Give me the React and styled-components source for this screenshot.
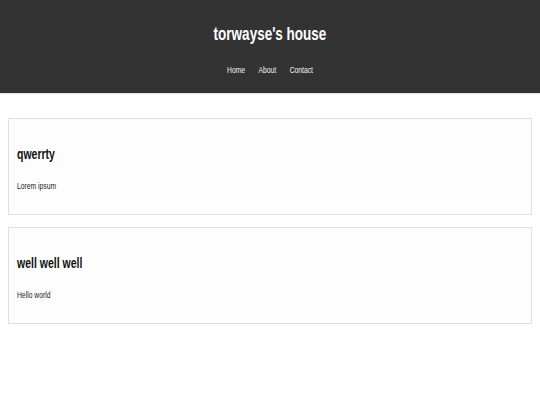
import React from 'react';
import styled, { createGlobalStyle } from 'styled-components';

const GlobalStyle = createGlobalStyle`
  html, body {
    margin: 0;
    padding: 0;
    background: #fff;
    font-family: 'Liberation Sans', Arial, sans-serif;
  }
`;

// the reference uses a condensed face; squeeze Liberation Sans to match
const condensed = `
  transform: scaleX(0.75);
`;

const Header = styled.header`
  background: #333;
  color: #fff;
  height: 94px;
  box-sizing: border-box;
  border-bottom: 1px solid #e2e2e2;
  padding-top: 23px;
  text-align: center;
`;

const Title = styled.h1`
  margin: 0;
  font-size: 18px;
  line-height: 22px;
  font-weight: bold;
  ${condensed}
  transform-origin: center;
`;

const Nav = styled.nav`
  display: flex;
  justify-content: center;
  gap: 18px;
  margin-top: 19px;
  ${condensed}
  transform-origin: center;
  > a {
    color: #f4f4f4;
    text-decoration: none;
    font-size: 9px;
    line-height: 12px;
  }
`;

const Main = styled.main`
  display: flex;
  flex-direction: column;
  gap: 12px;
  padding: 24px 8px;
`;

const Card = styled.article`
  border: 1px solid #e0e0e0;
  background: #fdfdfd;
  padding: 27px 8px 22px;
  > h2 {
    margin: 0;
    font-size: 14px;
    line-height: 16px;
    color: #111;
    ${condensed}
    transform-origin: left;
  }
  > p {
    margin: 18px 0 0;
    font-size: 9px;
    line-height: 12px;
    color: #222;
    ${condensed}
    transform-origin: left;
  }
`;

const posts = [
  { id: 1, title: 'qwerrty', body: 'Lorem ipsum' },
  { id: 2, title: 'well well well', body: 'Hello world' },
];

function App() {
  return (
    <>
      <GlobalStyle />
      <Header>
        <Title>torwayse's house</Title>
        <Nav>
          <a href="#">Home</a>
          <a href="#">About</a>
          <a href="#">Contact</a>
        </Nav>
      </Header>
      <Main>
        {posts.map((post) => (
          <Card key={post.id}>
            <h2>{post.title}</h2>
            <p>{post.body}</p>
          </Card>
        ))}
      </Main>
    </>
  );
}

export default App;
